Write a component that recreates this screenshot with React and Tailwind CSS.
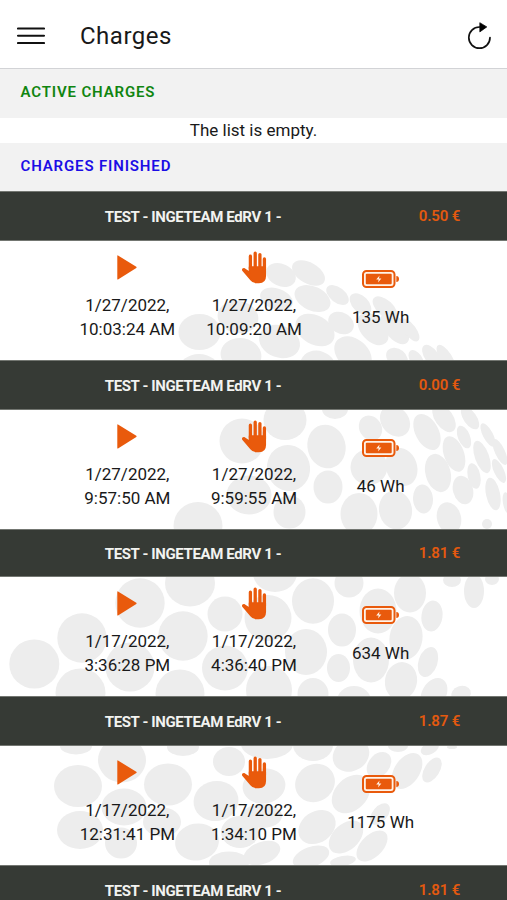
const charges = [
  { id: 1, price: "0.50 €", start: ["1/27/2022,", "10:03:24 AM"], end: ["1/27/2022,", "10:09:20 AM"], energy: "135 Wh", size: "h-[169px]", bar: "h-[50px]" },
  { id: 2, price: "0.00 €", start: ["1/27/2022,", "9:57:50 AM"], end: ["1/27/2022,", "9:59:55 AM"], energy: "46 Wh", size: "h-[169px]", bar: "h-[50px]" },
  { id: 3, price: "1.81 €", start: ["1/17/2022,", "3:36:28 PM"], end: ["1/17/2022,", "4:36:40 PM"], energy: "634 Wh", size: "h-[167px]", bar: "h-[48px]" },
  { id: 4, price: "1.87 €", start: ["1/17/2022,", "12:31:41 PM"], end: ["1/17/2022,", "1:34:10 PM"], energy: "1175 Wh", size: "h-[169px]", bar: "h-[50px]" },
  { id: 5, price: "1.81 €", size: "h-[50px]", bar: "h-[50px]" },
];

// cx, cy, rx, ry, rotation
const dots = [
  [281, 275, 15.5, 11, 25], [308.5, 273, 18, 10.5, 30], [276.5, 299, 17, 10.5, 20],
  [312.5, 298.5, 19, 12, 25], [337.5, 295, 13, 7.5, 38], [360.5, 304, 13, 8, 45],
  [385, 308, 15, 8, 42], [199.5, 332, 21, 18, 0], [238, 317, 20.5, 16, 10],
  [279.5, 341.5, 21, 16, 20], [315, 330, 21, 14.5, 30], [341, 323, 13.5, 10.5, 30],
  [241, 355, 20.5, 17, 10], [199, 369, 20, 15, 0], [318, 366, 18, 15, 20],
  [353, 354, 21, 15, 40], [373, 329, 19, 12, 48], [395, 328, 19, 10, 52],
  [410, 330, 13.5, 6, 53], [397, 358, 12, 9, 40], [416, 359, 10, 6, 55],
  [432, 357, 14, 7, 55], [446, 358, 15, 6, 58],
  [242, 441, 22.5, 22.5, 0], [285, 420, 21.5, 20, 0], [335, 409, 13, 10, 0],
  [326.5, 446.5, 19, 22, -15], [288.5, 468, 21.5, 23, -15], [249, 495, 22.5, 19.5, 0],
  [198, 526, 24.5, 24, 0], [289.5, 512, 16, 16.5, 0], [328, 487, 14.5, 16.5, 0],
  [369, 467, 18.5, 18, -10], [359, 514, 18.5, 21, 0], [401.5, 467, 15.5, 19.5, -20],
  [395.5, 510, 16.5, 19.5, -10], [370.5, 428, 11, 13, -35], [395, 421, 13.5, 17, -40],
  [427, 432, 11.5, 19.5, -28], [438, 473, 12.5, 19.5, -15], [444, 418, 9, 16, -35],
  [423, 499, 10, 14.5, -5], [449, 518, 12, 16, -15], [454, 454, 10, 18.5, -20],
  [464, 437, 6, 12, -22], [463, 490, 10, 14.5, -15], [470, 418, 6.5, 13, -35],
  [482, 457, 7, 17, -20], [474, 476, 6.3, 13, -12], [488, 435, 5, 13, -28],
  [493, 494, 7, 16.5, -12], [500, 452, 5, 14, -25], [499, 471, 5, 13, -25],
  [507, 503, 4, 11, -10], [487, 524, 5, 5, 0],
  [34.3, 664, 25, 24.5, 0], [82, 638, 24.7, 24.7, 0], [140, 603, 24.7, 24.7, 0],
  [190, 583, 25, 23.5, 0], [183, 636, 24.7, 24.7, 0], [225, 614, 17.5, 17.5, 0],
  [130, 667, 24.5, 24.5, 0], [80.5, 693, 25, 24.5, 0], [180, 694, 24.5, 24.5, 0],
  [225, 668, 23, 22.5, 0], [268, 618, 23.5, 23, 0], [275, 573, 22, 19, 0],
  [313, 601, 21, 22.8, 0], [306, 652, 21, 23, 0], [269, 690, 23, 24, 0],
  [313, 694, 15.5, 16, 0], [349, 583, 14.5, 14.5, 0], [378, 611, 18.5, 22.5, 0],
  [342, 630, 14, 16.5, 0], [338.5, 668, 11.5, 14, 0], [371, 660, 18, 22.5, 0],
  [354, 701, 17, 15, 0], [406, 638, 16.5, 22, 8], [410, 593, 16, 19.5, 0],
  [432, 616, 10.5, 15.5, 8], [474, 591, 10, 17, 0], [452, 580, 9, 7, 0],
  [492, 579, 7, 6, 0], [401, 681, 16, 19, 12], [428, 662, 9.5, 15.5, 18],
  [434, 694, 12, 17, 30], [461, 694, 10, 8, -20],
  [76, 746, 16, 8.5, 0], [122, 760, 24, 22.5, 0], [183, 747, 16, 9, 0],
  [78, 786, 24, 21, 0], [168, 784.5, 24, 21, 0], [229, 761.5, 16, 14.5, 0],
  [124, 807, 22.5, 18.5, 0], [80, 830, 23, 19, 0], [216, 801, 22.5, 20, -10],
  [121, 843, 16, 15.5, 0], [162, 822, 19, 14.5, 0], [197, 842, 22, 18.5, -10],
  [229, 863, 20, 11.5, 0], [240, 832, 19, 16, 0], [267, 744, 26, 15, 0],
  [313, 745, 20, 16, 0], [351, 755, 19, 16, -30], [264, 786, 21.5, 17.5, -10],
  [315, 783, 20.5, 18.5, -35], [351, 794, 22, 16, -45], [379, 765, 14.5, 10.5, -50],
  [407, 771, 20, 12.5, -55], [432, 770, 14, 7.5, -58], [317, 827, 20, 15.5, -35],
  [346, 837, 20, 13, -42], [372, 846, 19, 11, -45], [380, 814, 12.5, 7.5, -50],
  [262, 853, 19, 11, -20], [311, 857, 19, 10, -20], [343, 861, 13, 5, -10],
  [430, 748, 10, 6, -30], [398, 746, 10, 6, 0], [262, 816, 20, 12, 0], [452, 747, 5, 2, 0],
];

const DotsBackground = () => (
  <svg className="absolute inset-0 h-[900px] w-[507px]" viewBox="0 0 507 900" fill="#ededed">
    {dots.map(([cx, cy, rx, ry, r], i) => (
      <ellipse key={i} cx={cx} cy={cy} rx={rx} ry={ry} transform={`rotate(${r} ${cx} ${cy})`} />
    ))}
  </svg>
);

const MenuIcon = () => (
  <svg className="h-[18px] w-[28px]" viewBox="0 0 28 18" stroke="#111" strokeWidth="2.1" strokeLinecap="round">
    <path d="M1 1.5h26M1 8.7h26M1 16h26" />
  </svg>
);

const RefreshIcon = () => (
  <svg className="h-[28px] w-[24px]" viewBox="0 0 24 28" fill="none">
    <path d="M12.5 5A10.6 10.6 0 1 0 23 15.5" stroke="#111" strokeWidth="1.7" strokeLinecap="round" />
    <path d="M12.8 .7v9.2l7-5z" fill="#000" stroke="#000" strokeWidth=".7" strokeLinejoin="round" />
  </svg>
);

const PlayIcon = () => (
  <svg className="h-[25px] w-[20px]" viewBox="0 0 20 25" fill="#e95a0c">
    <path d="M.3.8Q.3 0 1 .5L19.3 11.8Q20 12.4 19.3 13L1 24.4Q.3 24.8.3 24z" />
  </svg>
);

const HandIcon = () => (
  <svg className="h-[33px] w-[26px]" viewBox="0 0 26 33" fill="#e95a0c" stroke="#e95a0c" strokeLinecap="round" strokeLinejoin="round">
    <path d="M9.4 18V5.2M14.2 17V2.2M18.9 17V3.6M23.4 19V8" strokeWidth="3.3" />
    <path d="M8.6 16H24.2V25Q24.2 31.4 18 31.4H15.2Q12 31.4 10 28.8L1.9 19.2Q1.6 17.7 3.2 17.9L8.6 21.5z" strokeWidth="1.7" />
  </svg>
);

const BatteryIcon = () => (
  <svg className="h-[18px] w-[37px]" viewBox="0 0 37 18">
    <rect x="1" y="1" width="31.5" height="16" rx="3.5" fill="#fff3e8" stroke="#e95a0c" strokeWidth="2" />
    <rect x="3.8" y="3.8" width="25.9" height="10.4" rx="1" fill="#e95a0c" />
    <path d="M34.3 6q2.7 0 2.7 3t-2.7 3z" fill="#e95a0c" />
    <path d="M17.6 5.5l-3.4 4.1h2.5l-.7 2.9 3.4-4h-2.5z" fill="#fff3e8" />
  </svg>
);

const Header = () => (
  <header className="flex h-[69px] items-center border-b border-[#d2d3d6] bg-white pl-[17px] pr-[16px] pt-[3px]">
    <MenuIcon />
    <h1 className="ml-[35px] flex-1 text-[24px] tracking-[0.5px]">Charges</h1>
    <RefreshIcon />
  </header>
);

const ListHeader = ({ children, className }) => (
  <h2 className={`bg-[#f2f2f2] pl-[20.5px] text-[15px] font-semibold leading-[20px] tracking-[0.85px] ${className}`}>
    {children}
  </h2>
);

const Charge = ({ charge }) => (
  <li className={charge.size}>
    <div className={`flex items-center border-y border-[#737671] bg-[#363a35] pl-[63px] ${charge.bar}`}>
      <p className="w-[260px] pt-[2px] text-center text-[15px] font-bold tracking-[-0.38px] text-[#f2f3f0]">TEST - INGETEAM EdRV 1 -</p>
      <p className="ml-[53px] w-[127px] text-center text-[15px] font-semibold tracking-[-0.1px] text-[#e3590f]">{charge.price}</p>
    </div>
    {charge.start && (
      <div className="ml-[64px] grid w-[380px] grid-cols-3 text-center text-[17px] leading-[24px]">
        <div className="flex flex-col items-center pt-[14px]">
          <PlayIcon />
          <p className="pt-[13px]">{charge.start[0]}<br />{charge.start[1]}</p>
        </div>
        <div className="flex flex-col items-center pt-[10px]">
          <HandIcon />
          <p className="pt-[9px]">{charge.end[0]}<br />{charge.end[1]}</p>
        </div>
        <div className="flex flex-col items-center pt-[29px]">
          <BatteryIcon />
          <p className="pt-[17px]">{charge.energy}</p>
        </div>
      </div>
    )}
  </li>
);

const App = () => {
  return (
    <div className="relative h-[900px] w-[507px] overflow-hidden bg-white font-[Roboto,sans-serif] text-[#191919]">
      <DotsBackground />
      <div className="relative">
        <Header />
        <ListHeader className="h-[49px] pt-[13px] text-[#108510]">ACTIVE CHARGES</ListHeader>
        <p className="h-[25px] bg-white text-center text-[17px] leading-[25px]">The list is empty.</p>
        <ListHeader className="h-[48px] pt-[13px] text-[#1b0de5]">CHARGES FINISHED</ListHeader>
        <ul>
          {charges.map((charge) => (
            <Charge key={charge.id} charge={charge} />
          ))}
        </ul>
      </div>
    </div>
  );
};

export default App;
